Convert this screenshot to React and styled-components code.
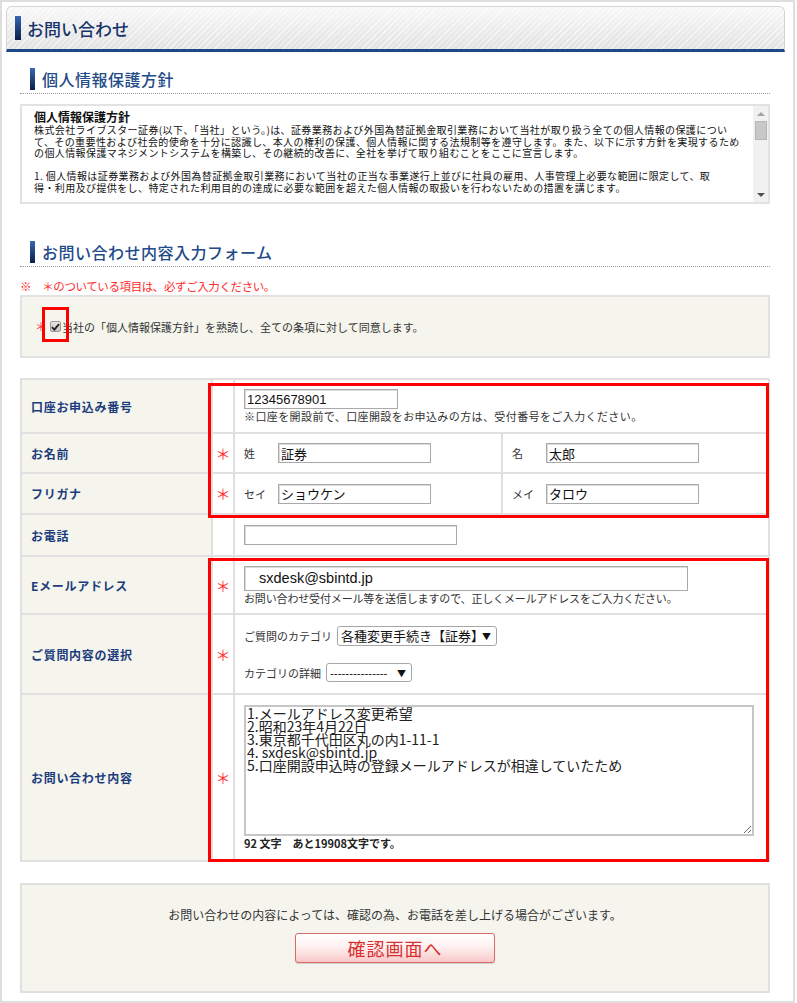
import React from 'react';
import styled, { createGlobalStyle } from 'styled-components';

const GlobalStyle = createGlobalStyle`
  body {
    margin: 0;
    background: #fff;
    color: #333;
    font-family: "Liberation Sans", "Noto Sans CJK JP", sans-serif;
  }
`;

const Frame = styled.div`
  width: 795px;
  height: 1003px;
  box-sizing: border-box;
  border: 2px solid #dedede;
  padding: 4px 8px 0 4px;
`;

const Header = styled.header`
  height: 46px;
  box-sizing: border-box;
  display: flex;
  align-items: center;
  gap: 6px;
  padding-left: 8px;
  border: 1px solid #d4d4d4;
  border-bottom: 3px solid #1d4785;
  border-radius: 6px 6px 0 0;
  background:
    repeating-linear-gradient(135deg, rgba(255, 255, 255, 0.6) 0 1px, transparent 1px 4px),
    linear-gradient(#f8f8f8, #e2e2e2);
`;

const Bar = styled.span`
  flex: none;
  width: ${({ $w }) => $w}px;
  height: ${({ $h }) => $h}px;
  background: linear-gradient(#3767b3, #0b1f48);
`;

const HeaderTitle = styled.h1`
  margin: 0;
  font-size: 17px;
  font-weight: 500;
  color: #17346a;
  font-family: "Noto Sans CJK JP", sans-serif;
`;

const Body = styled.div`
  padding: 0 15px 0 14px;
`;

const SectionTitle = styled.h2`
  margin: ${({ $top }) => $top}px 0 0;
  height: 22px;
  padding: 0 0 3px 10px;
  display: flex;
  align-items: center;
  gap: 7px;
  font-size: 16px;
  font-weight: 500;
  letter-spacing: 0.5px;
  color: #234b88;
  font-family: "Noto Sans CJK JP", sans-serif;
  border-bottom: 1px dotted #999;
`;

const PolicyBox = styled.div`
  position: relative;
  margin-top: 10px;
  height: 100px;
  box-sizing: border-box;
  border: 2px solid #e2e2e2;
  font-family: "Noto Sans CJK JP", sans-serif;
  color: #111;
`;

const PolicyScroll = styled.div`
  height: 100%;
  box-sizing: border-box;
  padding: 3px 27px 0 12px;
  overflow: hidden;
`;

const ScrollTrack = styled.div`
  position: absolute;
  top: 0;
  right: 0;
  bottom: 0;
  width: 15px;
  display: flex;
  flex-direction: column;
  align-items: center;
  background: #f1f1f1;
`;

const ScrollArrow = styled.span`
  flex: none;
  height: 15px;
  display: flex;
  align-items: center;
  justify-content: center;

  &::before {
    content: '';
    border-left: 4px solid transparent;
    border-right: 4px solid transparent;
    ${({ $down }) =>
      $down ? 'border-top: 4px solid #505050;' : 'border-bottom: 4px solid #a3a3a3;'}
  }
`;

const ScrollSpace = styled.span`
  flex: 1;
  width: 100%;
`;

const ScrollThumb = styled.span`
  display: block;
  width: 12px;
  height: 19px;
  margin: 0 auto;
  box-sizing: border-box;
  background: #c8c8c8;
  border: 1px solid #b6b6b6;
`;

const PolicyHead = styled.div`
  font-size: 12px;
  line-height: 15px;
  font-weight: bold;
`;

const PolicyPara = styled.p`
  margin: ${({ $gap }) => ($gap ? '11.5px' : '0')} 0 0;
  font-size: 10px;
  line-height: 11.5px;
  letter-spacing: 0.4px;
`;

const PolicyLine = styled.span`
  display: block;
  white-space: nowrap;
`;

const Note = styled.p`
  margin: 11px 0 1px;
  font-size: 11.5px;
  line-height: 16px;
  letter-spacing: -0.4px;
  color: #ff2a2a;
  font-family: "Noto Sans CJK JP", sans-serif;
`;

const AgreeBox = styled.div`
  position: relative;
  height: 63px;
  box-sizing: border-box;
  display: flex;
  align-items: center;
  padding-left: 13px;
  background: #f5f5ee;
  border: 2px solid #e2e2e2;
  font-size: 11px;
  font-family: "Noto Sans CJK JP", sans-serif;
  color: #333;
`;

const Star = styled.span`
  color: #ff3a3a;
  font-size: ${({ $fs }) => $fs || 15}px;
  font-family: "Noto Sans CJK JP", sans-serif;
`;

const CheckMark = styled.span`
  display: inline-flex;
  align-items: center;
  justify-content: center;
  width: 11px;
  height: 11px;
  margin: 0 1px 0 3px;
  box-sizing: border-box;
  border: 1px solid #9a9a9a;
  border-radius: 2px;
  background: linear-gradient(#e6e6e6, #c4c4c4);
`;

const Highlight = styled.span`
  position: absolute;
  top: ${({ $top }) => $top}px;
  left: ${({ $left }) => $left}px;
  width: ${({ $w }) => $w}px;
  height: ${({ $h }) => $h}px;
  box-sizing: border-box;
  border: 3px solid #f00;
  pointer-events: none;
`;

const TableWrap = styled.div`
  position: relative;
  margin-top: 20px;
`;

const FormTable = styled.table`
  width: 100%;
  table-layout: fixed;
  border-collapse: collapse;
  border: 2px solid #e0e0e0;
  font-family: "Liberation Sans", "Noto Sans CJK JP", sans-serif;
`;

const Row = styled.tr`
  height: ${({ $h }) => $h}px;
`;

const LabelCell = styled.th`
  padding: 0 0 0 9px;
  text-align: left;
  background: #f5f5ee;
  border: 2px solid #e0e0e0;
  font-size: 12px;
  letter-spacing: 0.7px;
  font-weight: bold;
  color: #1c3c7c;
  font-family: "Noto Sans CJK JP", sans-serif;
`;

const StarCell = styled.td`
  padding: 0;
  text-align: center;
  border: 2px solid #e0e0e0;
`;

const ValueCell = styled.td`
  padding: 0 0 0 9px;
  border: 2px solid #e0e0e0;
  font-size: 11px;
  color: #333;
  vertical-align: middle;
`;

const Input = styled.input`
  display: block;
  width: ${({ $w }) => $w}px;
  height: ${({ $h }) => $h || 20}px;
  box-sizing: border-box;
  margin: 0;
  padding: 0 0 0 ${({ $pl }) => $pl || 2}px;
  border: 1px solid #a9a9a9;
  box-shadow: inset 1px 1px 0 #dcdcdc;
  font-size: ${({ $fs }) => $fs || 13}px;
  font-family: "Liberation Sans", "Noto Sans CJK JP", sans-serif;
  color: #111;
  background: #fff;
`;

const Hint = styled.div`
  line-height: 14px;
  font-size: 11px;
  letter-spacing: ${({ $ls }) => $ls ?? -0.15}px;
  font-family: "Noto Sans CJK JP", sans-serif;
`;

const NamePart = styled.div`
  display: flex;
  align-items: center;
`;

const NameLabel = styled.span`
  width: 34px;
  font-size: 11px;
  font-family: "Noto Sans CJK JP", sans-serif;
`;

const Stack = styled.div`
  display: flex;
  flex-direction: column;
  gap: ${({ $gap }) => $gap || 0}px;
`;

const SelectRow = styled.div`
  display: flex;
  align-items: center;
  gap: 5px;
  font-family: "Noto Sans CJK JP", sans-serif;
  font-size: 11px;
`;

const SelectWrap = styled.span`
  position: relative;
  display: inline-block;
  width: ${({ $w }) => $w}px;
  height: ${({ $h }) => $h}px;
`;

const Select = styled.select`
  appearance: none;
  width: 100%;
  height: 100%;
  box-sizing: border-box;
  margin: 0;
  padding: 0 0 0 3px;
  border: 1px solid #a6a6a6;
  border-radius: 3px;
  background: #fff;
  color: #111;
  font-size: ${({ $fs }) => $fs}px;
  font-family: "Liberation Sans", "Noto Sans CJK JP", sans-serif;
`;

const Arrow = styled.span`
  position: absolute;
  right: 6px;
  top: 50%;
  transform: translateY(-50%);
  font-size: 9px;
  color: #111;
  pointer-events: none;
`;

const TextArea = styled.textarea`
  display: block;
  width: 510px;
  height: 131px;
  box-sizing: border-box;
  margin: 0;
  padding: 0 1px;
  border: 2px solid #c6c6c6;
  resize: both;
  font-size: 14px;
  line-height: 13px;
  color: #222;
  font-family: "Noto Sans CJK JP", sans-serif;
`;

const Counter = styled.div`
  line-height: 14px;
  font-size: 11px;
  font-weight: bold;
  color: #222;
  font-family: "Noto Sans CJK JP", sans-serif;
`;

const Footer = styled.div`
  margin-top: 21px;
  height: 110px;
  box-sizing: border-box;
  padding-top: 22px;
  display: flex;
  flex-direction: column;
  align-items: center;
  gap: 10px;
  background: #f5f5ee;
  border: 2px solid #e0e0e0;
  font-family: "Noto Sans CJK JP", sans-serif;
`;

const FooterText = styled.p`
  margin: 0;
  line-height: 16px;
  font-size: 12px;
  color: #333;
`;

const ConfirmButton = styled.button`
  width: 200px;
  height: 30px;
  border: 1px solid #d86a6a;
  border-radius: 3px;
  background: linear-gradient(#ffffff 0%, #fff1f1 45%, #f8c8c8 100%);
  box-shadow: 0 1px 1px rgba(0, 0, 0, 0.15);
  color: #d93030;
  font-size: 18px;
  letter-spacing: 1px;
  font-family: "Noto Sans CJK JP", sans-serif;
  cursor: pointer;
`;

const policy = [
  [
    '株式会社ライブスター証券(以下、「当社」という。)は、証券業務および外国為替証拠金取引業務において当社が取り扱う全ての個人情報の保護につい',
    'て、その重要性および社会的使命を十分に認識し、本人の権利の保護、個人情報に関する法規制等を遵守します。また、以下に示す方針を実現するため',
    'の個人情報保護マネジメントシステムを構築し、その継続的改善に、全社を挙げて取り組むことをここに宣言します。',
  ],
  [
    '1. 個人情報は証券業務および外国為替証拠金取引業務において当社の正当な事業遂行上並びに社員の雇用、人事管理上必要な範囲に限定して、取',
    '得・利用及び提供をし、特定された利用目的の達成に必要な範囲を超えた個人情報の取扱いを行わないための措置を講じます。',
  ],
  ['2. 個人情報保護に関する法令、国が定める指針その他の規範を遵守します。'],
  ['3. 個人情報の漏えい、滅失又はき損の防止及び是正のため、合理的な安全対策を講じます。'],
  ['4. 個人情報の取扱いに関する苦情及び相談に対しては、迅速かつ適切に対応します。'],
  ['5. 個人情報保護マネジメントシステムを継続的に見直し、改善します。'],
];

const inquiry = `1.メールアドレス変更希望
2.昭和23年4月22日
3.東京都千代田区丸の内1-11-1
4. sxdesk@sbintd.jp
5.口座開設申込時の登録メールアドレスが相違していたため`;

const CheckIcon = () => (
  <svg width="9" height="8" viewBox="0 0 9 8">
    <path d="M1 4.2 L3.4 6.6 L8 1.2" fill="none" stroke="#222" strokeWidth="1.8" />
  </svg>
);

export default function App() {
  return (
    <>
      <GlobalStyle />
      <Frame>
        <Header>
          <Bar $w={6} $h={24} />
          <HeaderTitle>お問い合わせ</HeaderTitle>
        </Header>

        <Body>
          <SectionTitle $top={16}>
            <Bar $w={5} $h={22} />
            個人情報保護方針
          </SectionTitle>

          <PolicyBox>
            <PolicyScroll>
              <PolicyHead>個人情報保護方針</PolicyHead>
              {policy.map((para, i) => (
                <PolicyPara key={i} $gap={i > 0}>
                  {para.map((line) => (
                    <PolicyLine key={line}>{line}</PolicyLine>
                  ))}
                </PolicyPara>
              ))}
            </PolicyScroll>
            <ScrollTrack aria-hidden="true">
              <ScrollArrow />
              <ScrollSpace>
                <ScrollThumb />
              </ScrollSpace>
              <ScrollArrow $down />
            </ScrollTrack>
          </PolicyBox>

          <SectionTitle $top={37}>
            <Bar $w={5} $h={22} />
            お問い合わせ内容入力フォーム
          </SectionTitle>

          <Note>※　＊のついている項目は、必ずご入力ください。</Note>

          <AgreeBox>
            <Star $fs={12}>＊</Star>
            <CheckMark role="checkbox" aria-checked="true">
              <CheckIcon />
            </CheckMark>
            当社の「個人情報保護方針」を熟読し、全ての条項に対して同意します。
            <Highlight $top={10} $left={20} $w={27} $h={35} />
          </AgreeBox>

          <TableWrap>
            <FormTable>
              <colgroup>
                <col style={{ width: 191 }} />
                <col style={{ width: 22 }} />
                <col style={{ width: 268 }} />
                <col />
              </colgroup>
              <tbody>
                <Row $h={54}>
                  <LabelCell>口座お申込み番号</LabelCell>
                  <StarCell />
                  <ValueCell colSpan={2}>
                    <Input $w={154} defaultValue="12345678901" />
                    <Hint $ls={0.4}>※口座を開設前で、口座開設をお申込みの方は、受付番号をご入力ください。</Hint>
                  </ValueCell>
                </Row>
                <Row $h={40}>
                  <LabelCell>お名前</LabelCell>
                  <StarCell><Star>＊</Star></StarCell>
                  <ValueCell>
                    <NamePart>
                      <NameLabel>姓</NameLabel>
                      <Input $w={153} defaultValue="証券" />
                    </NamePart>
                  </ValueCell>
                  <ValueCell>
                    <NamePart>
                      <NameLabel>名</NameLabel>
                      <Input $w={153} defaultValue="太郎" />
                    </NamePart>
                  </ValueCell>
                </Row>
                <Row $h={41}>
                  <LabelCell>フリガナ</LabelCell>
                  <StarCell><Star>＊</Star></StarCell>
                  <ValueCell>
                    <NamePart>
                      <NameLabel>セイ</NameLabel>
                      <Input $w={153} defaultValue="ショウケン" />
                    </NamePart>
                  </ValueCell>
                  <ValueCell>
                    <NamePart>
                      <NameLabel>メイ</NameLabel>
                      <Input $w={153} defaultValue="タロウ" />
                    </NamePart>
                  </ValueCell>
                </Row>
                <Row $h={42}>
                  <LabelCell>お電話</LabelCell>
                  <StarCell />
                  <ValueCell colSpan={2}>
                    <Input $w={213} />
                  </ValueCell>
                </Row>
                <Row $h={58}>
                  <LabelCell>Eメールアドレス</LabelCell>
                  <StarCell><Star>＊</Star></StarCell>
                  <ValueCell colSpan={2}>
                    <Input $w={444} $h={25} $pl={14} $fs={14.5} defaultValue="sxdesk@sbintd.jp" />
                    <Hint>お問い合わせ受付メール等を送信しますので、正しくメールアドレスをご入力ください。</Hint>
                  </ValueCell>
                </Row>
                <Row $h={80}>
                  <LabelCell>ご質問内容の選択</LabelCell>
                  <StarCell><Star>＊</Star></StarCell>
                  <ValueCell colSpan={2}>
                    <Stack $gap={17}>
                      <SelectRow>
                        ご質問のカテゴリ
                        <SelectWrap $w={160} $h={20}>
                          <Select $fs={13} defaultValue="a">
                            <option value="a">各種変更手続き【証券】</option>
                          </Select>
                          <Arrow>▼</Arrow>
                        </SelectWrap>
                      </SelectRow>
                      <SelectRow>
                        カテゴリの詳細
                        <SelectWrap $w={86} $h={19}>
                          <Select $fs={11.5} defaultValue="none">
                            <option value="none">---------------</option>
                          </Select>
                          <Arrow>▼</Arrow>
                        </SelectWrap>
                      </SelectRow>
                    </Stack>
                  </ValueCell>
                </Row>
                <Row $h={167}>
                  <LabelCell>お問い合わせ内容</LabelCell>
                  <StarCell><Star>＊</Star></StarCell>
                  <ValueCell colSpan={2}>
                    <TextArea defaultValue={inquiry} />
                    <Counter>92 文字　あと19908文字です。</Counter>
                  </ValueCell>
                </Row>
              </tbody>
            </FormTable>
            <Highlight $top={5} $left={188} $w={561} $h={135} />
            <Highlight $top={180} $left={188} $w={561} $h={304} />
          </TableWrap>

          <Footer>
            <FooterText>お問い合わせの内容によっては、確認の為、お電話を差し上げる場合がございます。</FooterText>
            <ConfirmButton type="button">確認画面へ</ConfirmButton>
          </Footer>
        </Body>
      </Frame>
    </>
  );
}
